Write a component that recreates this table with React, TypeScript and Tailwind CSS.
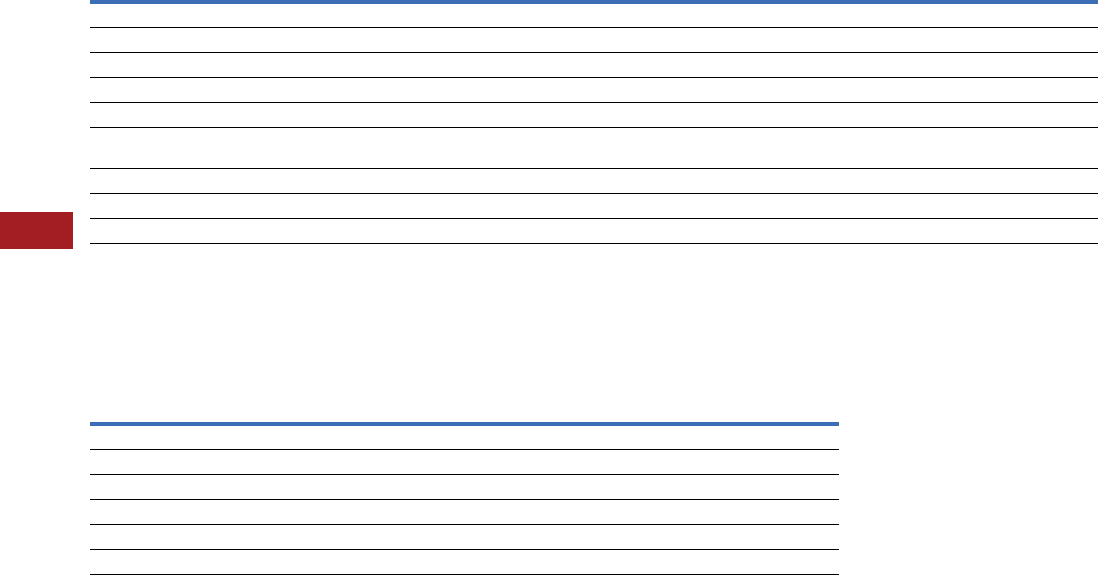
export default function App() {
  const topRows = [23, 24, 24, 24, 24, 40, 24, 24, 24]
  const bottomRows = [23, 24, 24, 24, 24, 24]

  return (
    <div className="flex w-[1098px] h-[575px] bg-white overflow-hidden font-['Liberation_Sans',sans-serif]">
      {/* Left margin with the section marker */}
      <aside className="w-[90px] shrink-0">
        <div className="mt-[212px] w-[73px] h-[37px] bg-[#a21e23]"></div>
      </aside>

      <main className="flex-1 flex flex-col">
        <div className="w-full border-t-4 border-[#3d6db5]">
          {topRows.map((h, i) => (
            <div key={i} className="border-b border-black" style={{ height: h + 1 }}></div>
          ))}
        </div>

        <div className="mt-[178px] w-[749px] border-t-4 border-[#3d6db5]">
          {bottomRows.map((h, i) => (
            <div key={i} className="border-b border-black" style={{ height: h + 1 }}></div>
          ))}
        </div>
      </main>
    </div>
  )
}
